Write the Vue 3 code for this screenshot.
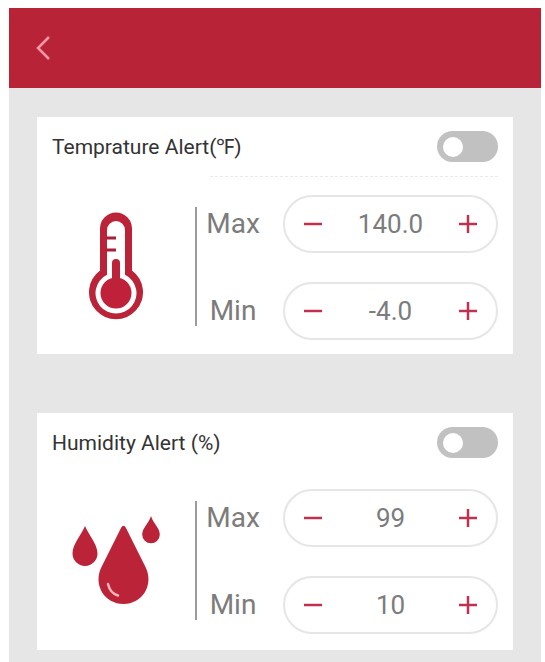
<script setup>
import { reactive } from 'vue'

const cards = reactive([
  {
    id: 'temperature',
    title: 'Temprature Alert(℉)',
    enabled: false,
    digits: 1,
    limits: [
      { label: 'Max', value: '140.0' },
      { label: 'Min', value: '-4.0' },
    ],
  },
  {
    id: 'humidity',
    title: 'Humidity Alert (%)',
    enabled: false,
    digits: 0,
    limits: [
      { label: 'Max', value: '99' },
      { label: 'Min', value: '10' },
    ],
  },
])

function step(card, limit, delta) {
  limit.value = (Number(limit.value) + delta).toFixed(card.digits)
}
</script>

<template>
  <div class="page">
    <div class="screen">
      <header class="topbar">
        <button class="back" type="button" aria-label="Back">
          <svg width="14" height="24" viewBox="0 0 14 24" fill="none" stroke="#fb97a6" stroke-width="2.500">
            <path d="M13 1 L2 12 L13 23" />
          </svg>
        </button>
      </header>

      <main class="cards">
        <section v-for="card in cards" :key="card.id" class="card">
          <div class="card-head">
            <label class="title" :for="card.id">{{ card.title }}</label>
            <input :id="card.id" v-model="card.enabled" class="switch" type="checkbox" role="switch" />
          </div>
          <div class="card-rule" :class="card.id"></div>

          <div class="card-body">
            <div class="art">
              <svg v-if="card.id === 'temperature'" width="54" height="108" viewBox="0 0 54 108">
                <path
                  d="M11 16.500 A16 16 0 0 1 43 16.500 V58.500 A27 27 0 1 1 11 58.500 Z"
                  fill="#ba2338"
                />
                <path
                  d="M18 18 A9 9 0 0 1 36 18 V62.700 A20.500 20.500 0 1 1 18 62.700 Z"
                  fill="#fff"
                />
                <circle cx="27" cy="81" r="15.500" fill="#c0203a" />
                <path d="M27 51 V72" stroke="#ba2338" stroke-width="8" stroke-linecap="round" />
                <path d="M17 26 H27 M17 38 H27" stroke="#a81f38" stroke-width="3" />
              </svg>
              <svg v-else width="88" height="90" viewBox="0 0 88 90">
                <g fill="#ba2338">
                  <path d="M49 13 Q51.500 8.500 54 13 L73 51 C83 70 70 89 51.500 89 C33 89 20 70 30 51 Z" />
                  <path d="M13 11 C16 19 25.500 29 25.500 38.500 A12.500 12.500 0 0 1 0.500 38.500 C0.500 29 10 19 13 11 Z" />
                  <path d="M79 1 C81 8 87.800 13 87.800 19.500 A8.800 8.800 0 0 1 70.200 19.500 C70.200 13 77 8 79 1 Z" />
                </g>
                <path d="M36 69 Q38 78 46 80.500" fill="none" stroke="#ffb3bd" stroke-width="2.500" stroke-linecap="round" />
              </svg>
            </div>
            <div class="divider"></div>
            <div class="limits">
              <div v-for="limit in card.limits" :key="limit.label" class="limit">
                <label class="limit-label" :for="card.id + limit.label">{{ limit.label }}</label>
                <div class="stepper">
                  <button type="button" :aria-label="'Decrease ' + limit.label" @click="step(card, limit, -1)">
                    <svg width="20" height="20" viewBox="0 0 20 20" stroke="#c0304f" stroke-width="2.500">
                      <path d="M1 10 H19" />
                    </svg>
                  </button>
                  <input :id="card.id + limit.label" v-model="limit.value" type="text" inputmode="decimal" />
                  <button type="button" :aria-label="'Increase ' + limit.label" @click="step(card, limit, 1)">
                    <svg width="20" height="20" viewBox="0 0 20 20" stroke="#c0304f" stroke-width="2.500">
                      <path d="M1 10 H19 M10 1 V19" />
                    </svg>
                  </button>
                </div>
              </div>
            </div>
          </div>
        </section>
      </main>
    </div>
  </div>
</template>

<style>
body {
  background: #fff;
}
</style>

<style scoped>
.page,
.page * {
  box-sizing: border-box;
}

.page {
  display: flex;
  min-height: 100vh;
  padding: 8px 4px 0 9px;
  font-family: Roboto, "Liberation Sans", sans-serif;
}

.screen {
  flex: 1;
  min-width: 0;
  background: #e6e6e6;
}

.topbar {
  display: flex;
  align-items: center;
  height: 80px;
  padding: 0 24px;
  background: #b82338;
}

button {
  display: flex;
  align-items: center;
  justify-content: center;
  padding: 0;
  border: 0;
  background: none;
  cursor: pointer;
}

.back {
  width: 20px;
  height: 40px;
}

.cards {
  display: flex;
  flex-direction: column;
  gap: 59px;
  padding: 29px 28px 12px;
}

.card {
  min-height: 237px;
  padding-bottom: 14px;
  background: #fff;
}

.card-head {
  display: flex;
  align-items: center;
  justify-content: space-between;
  height: 59px;
  padding: 0 15px;
}

.title {
  color: #333;
  font-size: 21px;
  line-height: 24px;
}

.switch {
  display: flex;
  align-items: center;
  width: 61px;
  height: 31px;
  margin: 0;
  padding: 0 6px;
  border-radius: 16px;
  background: #c1c1c1;
  appearance: none;
  cursor: pointer;
}

.switch::before {
  width: 20px;
  height: 20px;
  border-radius: 50%;
  background: #fff;
  content: "";
}

.switch:checked {
  justify-content: flex-end;
  background: #b82338;
}

.card-rule {
  height: 1px;
  margin: 0 15px 16px 173px;
}

.card-rule.temperature {
  height: 3px;
  border-top: 1px dashed #e9e9e9;
}

.card-body {
  display: grid;
  grid-template-columns: 1fr 2px 2fr;
}

.art {
  display: flex;
  align-items: center;
  justify-content: center;
  padding-bottom: 4px;
}

.divider {
  margin: 12px 0 14px;
  background: #9b9b9b;
}

.limits {
  display: flex;
  flex-direction: column;
  gap: 29px;
  padding: 0 15px 0 9px;
}

.limit {
  display: flex;
  align-items: center;
  gap: 23px;
}

.limit-label {
  width: 54px;
  color: #7c7c7c;
  font-size: 28px;
  line-height: 32px;
  text-align: center;
}

.stepper {
  display: flex;
  flex: 1;
  align-items: center;
  min-width: 0;
  height: 58px;
  padding: 0 10px;
  border: 2px solid #e6e6e6;
  border-radius: 29px;
}

.stepper button {
  flex: none;
  width: 36px;
  height: 40px;
}

.stepper input {
  flex: 1;
  width: 0;
  min-width: 0;
  padding: 0;
  border: 0;
  background: none;
  color: #7c7c7c;
  font-family: inherit;
  font-size: 26px;
  line-height: 32px;
  text-align: center;
}
</style>
